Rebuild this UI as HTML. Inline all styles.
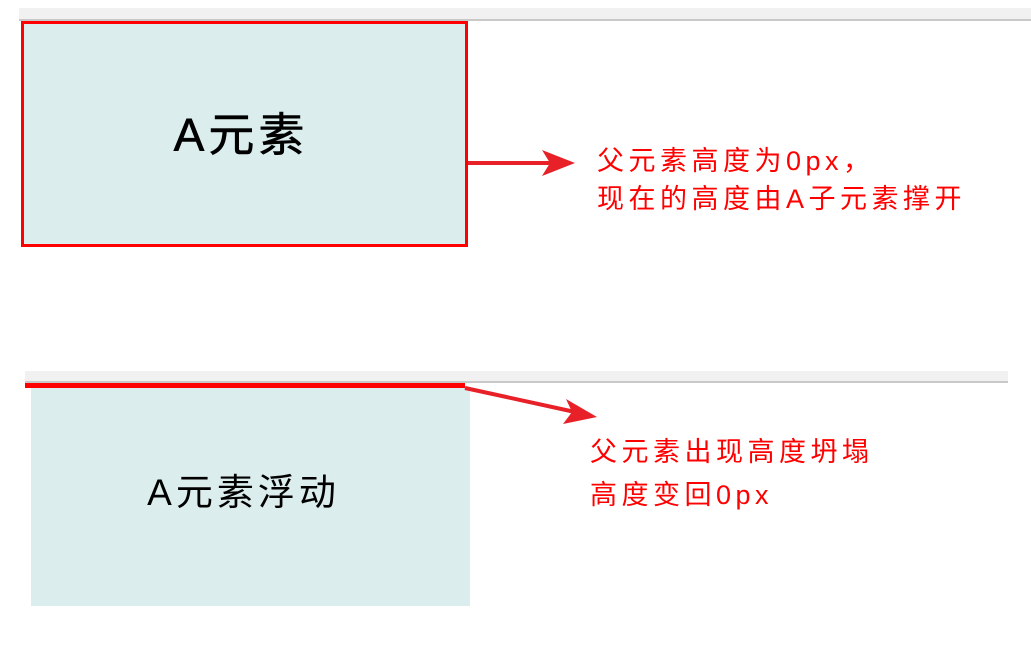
<!DOCTYPE html>
<html><head><meta charset="utf-8"><style>
body{margin:0;width:1031px;height:646px;background:#fff;position:relative;overflow:hidden;font-family:"Liberation Sans","Noto Sans CJK SC",sans-serif}
div{position:absolute}
.t{color:#f00;font-size:27px;letter-spacing:4.5px;white-space:nowrap;line-height:1}
</style></head><body>
<div style="left:19px;top:8px;width:1012px;height:11px;background:#f1f1f1;border-bottom:2px solid #c8c8c8"></div>
<div style="left:21px;top:21px;width:441px;height:220px;background:#dbeded;border:3px solid #f00"></div>
<div style="left:18px;top:107px;width:446px;text-align:center;font-size:46px;letter-spacing:4px;line-height:56px;color:#000;-webkit-text-stroke:0.6px #000">A元素</div>
<div style="left:25px;top:371px;width:983px;height:10px;background:#f1f1f1;border-bottom:2px solid #c8c8c8"></div>
<div style="left:31px;top:388px;width:439px;height:218px;background:#dbeded"></div>
<div style="left:25px;top:383px;width:440px;height:5px;background:#f00"></div>
<div style="left:24px;top:471px;width:439px;text-align:center;font-size:37px;letter-spacing:4px;line-height:44px;color:#000">A元素浮动</div>
<svg style="position:absolute;left:0;top:0" width="1031" height="646">
<line x1="468" y1="163" x2="550" y2="163" stroke="#e82028" stroke-width="4"/>
<polygon points="542,150 575,163 542,176 550,163" fill="#e82028"/>
<line x1="465" y1="388" x2="575" y2="412" stroke="#e82028" stroke-width="4"/>
<polygon points="566,399 597,417 563,424 572,412" fill="#e82028"/>
</svg>
<div class="t" style="left:597px;top:148px">父元素高度为0px，</div>
<div class="t" style="left:597px;top:186px">现在的高度由A子元素撑开</div>
<div class="t" style="left:590px;top:439px">父元素出现高度坍塌</div>
<div class="t" style="left:590px;top:482px">高度变回0px</div>
</body></html>
